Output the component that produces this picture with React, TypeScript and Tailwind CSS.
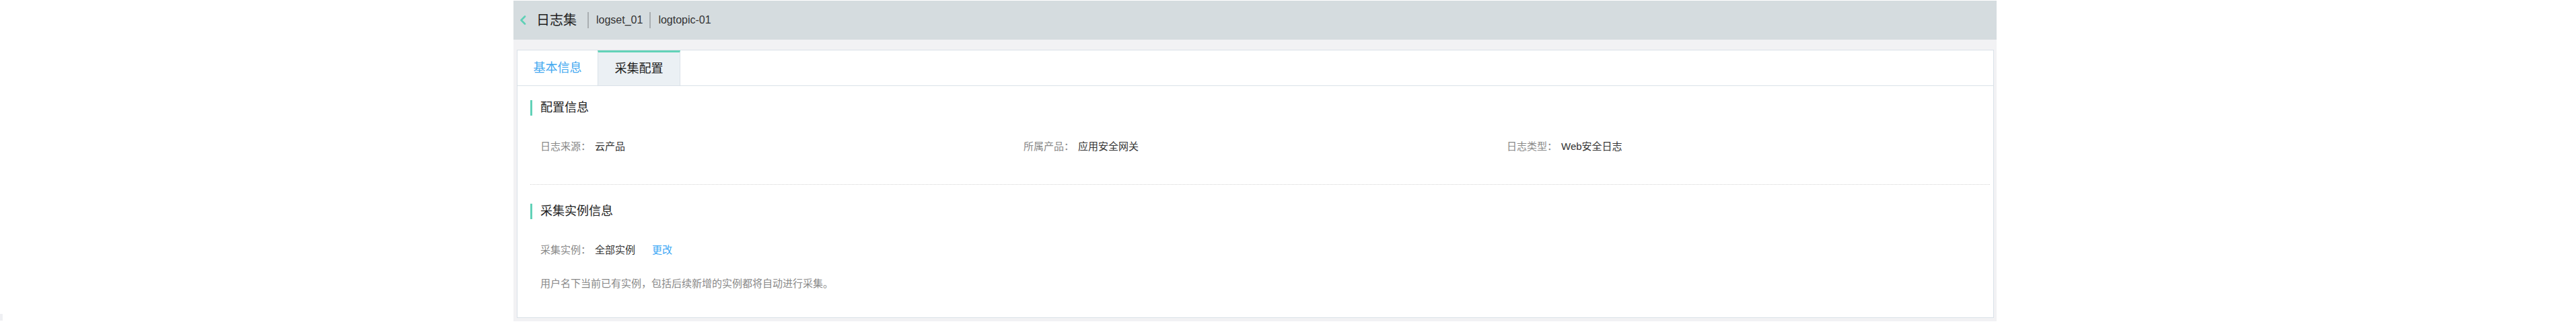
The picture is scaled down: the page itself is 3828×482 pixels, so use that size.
import React from "react";

const font = { fontFamily: '"Liberation Sans", "Noto Sans CJK SC", sans-serif' };

function SectionTitle({ children }: { children: React.ReactNode }) {
  return (
    <div className="flex h-[23px] items-center">
      <div className="h-[23px] w-[3px] bg-[#62d2b8]" />
      <span className="ml-[12px] text-[18px] leading-[23px] text-[#222]">{children}</span>
    </div>
  );
}

function Field({ label, value }: { label: string; value: string }) {
  return (
    <div className="flex items-center">
      <span className="mr-[6px] text-[#888]">{label}</span>
      <span className="text-[#333]">{value}</span>
    </div>
  );
}

export default function App() {
  return (
    <div className="relative h-[482px] w-[3828px] bg-white pt-px" style={font}>
      <div className="ml-[763px] w-[2204px]">
        {/* Header */}
        <div className="flex h-[58px] items-center bg-[#d5dcdf] pl-[9px]">
          <svg width="10" height="14" viewBox="0 0 10 14" className="shrink-0">
            <polyline points="8,1.5 2.5,7 8,12.5" fill="none" stroke="#5fd0b6" strokeWidth="2.6" strokeLinecap="round" strokeLinejoin="round" />
          </svg>
          <span className="ml-[15px] text-[20px] leading-[24px] text-[#222]">日志集</span>
          <div className="ml-[16px] h-[24px] w-[2px] bg-[#a9aeb1]" />
          <span className="ml-[11px] text-[16px] leading-[20px] text-[#333]">logset_01</span>
          <div className="ml-[10px] h-[24px] w-[2px] bg-[#a9aeb1]" />
          <span className="ml-[11px] text-[16px] leading-[20px] text-[#333]">logtopic-01</span>
        </div>

        {/* Gray area */}
        <div className="bg-[#f2f2f4] pb-[5px] pl-[5px] pr-[4px] pt-[15px]">
          <div className="border border-[#dae1e8] bg-white">
            {/* Tabs */}
            <div className="flex h-[53px] border-b border-[#dae1e8]">
              <div className="flex h-[52px] w-[119px] items-center justify-center text-[18px] text-[#44a8f0]">
                基本信息
              </div>
              <div className="flex h-[52px] w-[123px] items-center justify-center border-l border-r border-t-[3px] border-l-[#dae1e8] border-r-[#dae1e8] border-t-[#62d2b8] bg-[#ebf0f4] text-[18px] text-[#222]">
                采集配置
              </div>
            </div>

            {/* Body */}
            <div className="pb-[38px] pl-[19px] pr-[5px] pt-[21px] text-[15px]">
              <SectionTitle>配置信息</SectionTitle>
              <div className="mt-[34px] grid h-[24px] grid-cols-3 items-center pl-[15px] leading-[24px]">
                <Field label="日志来源：" value="云产品" />
                <Field label="所属产品：" value="应用安全网关" />
                <Field label="日志类型：" value="Web安全日志" />
              </div>

              <div className="mt-[44px] border-t border-dotted border-[#d3d3d3]" />

              <div className="mt-[28px]">
                <SectionTitle>采集实例信息</SectionTitle>
              </div>
              <div className="mt-[34px] flex h-[24px] items-center pl-[15px] leading-[24px]">
                <span className="mr-[6px] text-[#888]">采集实例：</span>
                <span className="text-[#333]">全部实例</span>
                <span className="ml-[25px] text-[#3ea8f5]">更改</span>
              </div>
              <div className="mt-[26px] h-[24px] pl-[15px] leading-[24px] text-[#888]">
                用户名下当前已有实例，包括后续新增的实例都将自动进行采集。
              </div>
            </div>
          </div>
        </div>
      </div>
      <div className="absolute left-0 top-[467px] h-[10px] w-[4px] bg-[#eff0f3]" />
    </div>
  );
}
